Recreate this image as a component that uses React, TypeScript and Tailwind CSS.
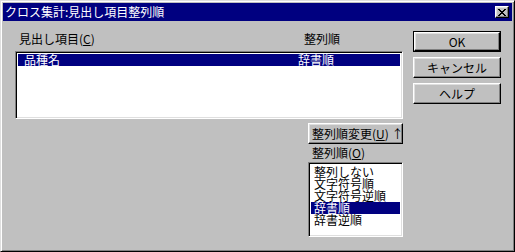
import React from 'react';

const FONT = "font-['Noto_Sans_CJK_JP',sans-serif]";

// 凸型の枠（ボタン）
const raised =
  'border border-t-white border-l-white border-r-black border-b-black shadow-[inset_-1px_-1px_#808080,inset_1px_1px_#dfdfdf]';

// 凹型の枠（リストボックス）
const sunken =
  'border border-t-[#808080] border-l-[#808080] border-r-white border-b-white shadow-[inset_1px_1px_#000000,inset_-1px_-1px_#dfdfdf]';

const SORT_OPTIONS = ['整列しない', '文字符号順', '文字符号逆順', '辞書順', '辞書逆順'];

const DialogButton: React.FC<{ label: React.ReactNode; isDefault?: boolean }> = ({
  label,
  isDefault,
}) => {
  if (isDefault) {
    return (
      <div className="h-[21px] w-[88px] border border-black">
        <button
          className={`flex h-full w-full items-center justify-center text-[12px] leading-[12px] text-black ${raised}`}
        >
          {label}
        </button>
      </div>
    );
  }
  return (
    <button
      className={`flex h-[21px] w-[88px] items-center justify-center text-[12px] leading-[12px] text-black ${raised}`}
    >
      {label}
    </button>
  );
};

export default function App() {
  const selectedSort = '辞書順';

  return (
    <div
      className={`h-[252px] w-[515px] border border-t-[#dfdfdf] border-l-[#dfdfdf] border-r-black border-b-black bg-[#c0c0c0] p-[2px] shadow-[inset_1px_1px_#ffffff,inset_-1px_-1px_#808080] ${FONT}`}
    >
      {/* タイトルバー */}
      <div className="flex h-[18px] items-center justify-between bg-[#000080] pl-[2px] pr-[3px]">
        <span className="whitespace-nowrap text-[12px] leading-[12px] text-white">
          クロス集計:見出し項目整列順
        </span>
        <button className={`flex h-[12px] w-[14px] items-center justify-center bg-[#c0c0c0] ${raised}`}>
          <svg width="8" height="7" viewBox="0 0 8 7" shapeRendering="crispEdges">
            <path d="M0 0h2v1h-2zM6 0h2v1h-2zM1 1h2v1h-2zM5 1h2v1h-2zM2 2h4v1h-4zM3 3h2v1h-2zM2 4h4v1h-4zM1 5h2v1h-2zM5 5h2v1h-2zM0 6h2v1h-2zM6 6h2v1h-2z" fill="#000" />
          </svg>
        </button>
      </div>

      <div className="flex pl-[12px]">
        {/* 左側 */}
        <div className="flex w-[388px] flex-col pt-[12px]">
          <div className="flex h-[12px] pl-[4px] text-[12px] leading-[12px] text-black">
            <span className="w-[285px] whitespace-nowrap">
              見出し項目(<span className="underline">C</span>)
            </span>
            <span>整列順</span>
          </div>

          <div className={`mt-[6px] h-[68px] bg-white p-[2px] ${sunken}`}>
            <div className="flex h-[12px] bg-[#000080] pl-[6px] text-[12px] leading-[12px] text-white">
              <span className="w-[274px]">品種名</span>
              <span>辞書順</span>
            </div>
          </div>

          <div className="ml-auto flex w-[95px] flex-col">
            <button
              className={`mt-[4px] flex h-[21px] items-center pl-[3px] text-[12px] leading-[12px] text-black ${raised}`}
            >
              <span className="whitespace-nowrap">
                整列順変更(<span className="underline">U</span>) ↑
              </span>
            </button>
            <div className="mt-[3px] h-[12px] whitespace-nowrap pl-[4px] text-[12px] leading-[12px] text-black">
              整列順(<span className="underline">O</span>)
            </div>
            <div className={`mt-[3px] h-[75px] bg-white px-[2px] pt-[3px] ${sunken}`}>
              {SORT_OPTIONS.map((opt) => (
                <div
                  key={opt}
                  className={`h-[12px] whitespace-nowrap pl-[3px] text-[12px] leading-[12px] ${
                    opt === selectedSort ? 'bg-[#000080] text-white' : 'text-black'
                  }`}
                >
                  {opt}
                </div>
              ))}
            </div>
          </div>
        </div>

        {/* 右側のボタン */}
        <div className="ml-[10px] flex flex-col gap-[5px] pt-[10px]">
          <DialogButton label="OK" isDefault />
          <DialogButton label="キャンセル" />
          <DialogButton label="ヘルプ" />
        </div>
      </div>
    </div>
  );
}
